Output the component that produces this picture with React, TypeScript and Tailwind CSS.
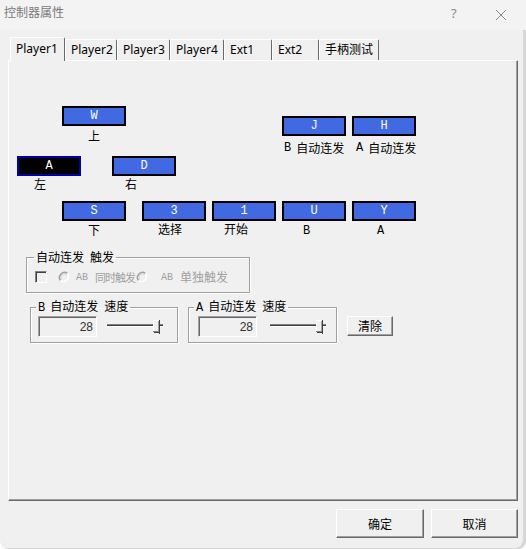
import React from "react";

const KeyBox = ({ k, dark }: { k: string; dark?: boolean }) => (
  <div
    className={
      dark
        ? "w-[64px] h-[20px] border-2 border-[#0000a8] bg-black text-white text-center font-['Liberation_Mono',monospace] text-[12px] leading-[16px]"
        : "w-[64px] h-[20px] border-2 border-black bg-[#4169e1] text-white text-center font-['Liberation_Mono',monospace] text-[12px] leading-[16px]"
    }
  >
    {k}
  </div>
);

const Mono = ({ children }: { children: React.ReactNode }) => (
  <span className="font-['Liberation_Mono',monospace] text-[12px]">{children}</span>
);

const Gap = ({ w }: { w: string }) => <span className={`inline-block ${w}`} />;

const Radio = () => (
  <svg width="12" height="12" viewBox="0 0 12 12" className="shrink-0">
    <path d="M9.5 2.5 A5 5 0 0 0 2.5 9.5" fill="none" stroke="#a0a0a0" strokeWidth="1.5" />
    <path d="M8.5 3.5 A3.6 3.6 0 0 0 3.5 8.5" fill="none" stroke="#d0d0d0" strokeWidth="1" />
    <path d="M2.5 9.5 A5 5 0 0 0 9.5 2.5" fill="none" stroke="#ffffff" strokeWidth="1.5" />
  </svg>
);

const Slider = () => (
  <svg width="57" height="16" viewBox="0 0 57 16" className="shrink-0">
    <rect x="0" y="5" width="56" height="1" fill="#808080" />
    <rect x="0" y="6" width="56" height="1" fill="#404040" />
    <rect x="0" y="7" width="56" height="1" fill="#ffffff" />
    <rect x="46" y="1" width="7" height="12" fill="#f0f0f0" />
    <rect x="46" y="1" width="1" height="12" fill="#ffffff" />
    <rect x="46" y="1" width="7" height="1" fill="#ffffff" />
    <rect x="52" y="1" width="1" height="14" fill="#404040" />
    <rect x="51" y="2" width="1" height="12" fill="#a0a0a0" />
    <rect x="46" y="12" width="6" height="1" fill="#808080" />
    <rect x="47" y="13" width="5" height="1" fill="#404040" />
  </svg>
);

const Edit = ({ w }: { w: string }) => (
  <div
    className={`${w} h-[21px] border border-t-[#a0a0a0] border-l-[#a0a0a0] border-r-white border-b-white shadow-[inset_1px_1px_0_#696969] bg-[#f0f0f0] flex items-center justify-end pr-[3px] font-['Liberation_Sans',sans-serif] text-[12px] text-[#333]`}
  >
    28
  </div>
);

const Btn = ({ label, w, h }: { label: string; w: string; h: string }) => (
  <div
    className={`${w} ${h} bg-[#f0f0f0] border border-t-white border-l-white border-r-[#696969] border-b-[#696969] shadow-[inset_-1px_-1px_0_#a0a0a0] flex items-center justify-center text-[12px]`}
  >
    {label}
  </div>
);

const tabs = [
  { t: "Player1", w: "w-[55px]" },
  { t: "Player2", w: "w-[52px]" },
  { t: "Player3", w: "w-[53px]" },
  { t: "Player4", w: "w-[54px]" },
  { t: "Ext1", w: "w-[48px]" },
  { t: "Ext2", w: "w-[47px]" },
  { t: "手柄测试", w: "w-[60px]" },
];

export default function App() {
  return (
    <div className="w-[526px] h-[549px] bg-[#f0f0f0] flex flex-col overflow-hidden rounded-b-[8px] shadow-[inset_-3px_-1px_0_#d8d8d8] font-['Noto_Sans','Noto_Sans_CJK_SC',sans-serif] text-[12px] text-black">
      {/* title bar */}
      <div className="h-[30px] flex items-start bg-[#f3f3f3]">
        <div className="pl-[4px] pt-[5px] leading-[16px] text-[12px] text-[#7a7a7a] flex-1">控制器属性</div>
        <div className="pt-[5px] leading-[16px] text-[13px] text-[#8a8a8a] w-[10px] mr-[34px]">?</div>
        <svg width="12" height="12" viewBox="0 0 12 12" className="mt-[9px] mr-[19px]">
          <path d="M1 1 L11 11 M11 1 L1 11" stroke="#8a8a8a" strokeWidth="1" />
        </svg>
      </div>

      {/* tabs */}
      <div className="h-[30px] flex items-end pl-[10px]">
        {tabs.map((tb, i) =>
          i === 0 ? (
            <div
              key={tb.t}
              className={`${tb.w} h-[24px] -mb-[1px] relative z-10 bg-[#f0f0f0] border-l border-t border-white border-r border-r-[#696969] rounded-tr-[2px] pl-[5px] pt-[3px] leading-[16px]`}
            >
              {tb.t}
            </div>
          ) : (
            <div
              key={tb.t}
              className={`${tb.w} h-[21px] bg-[#f0f0f0] border-l border-t border-white border-r border-r-[#696969] rounded-tr-[2px] pl-[5px] pt-[2px] leading-[16px]`}
            >
              {tb.t}
            </div>
          )
        )}
      </div>

      {/* panel */}
      <div className="ml-[8px] w-[510px] h-[441px] border border-t-white border-l-white border-r-[#696969] border-b-[#696969] shadow-[inset_-1px_-1px_0_#a0a0a0] flex flex-col font-['Noto_Sans_CJK_SC',sans-serif]">
        {/* row A */}
        <div className="mt-[45px] h-[50px] flex items-start">
          <div className="ml-[53px] flex flex-col">
            <KeyBox k="W" />
            <div className="mt-[3px] leading-[14px] text-center">上</div>
          </div>
          <div className="ml-[156px] mt-[10px] flex flex-col">
            <KeyBox k="J" />
            <div className="mt-[5px] leading-[14px] pl-[2px] whitespace-nowrap flex items-center">
              <Mono>B</Mono>
              <Gap w="w-[5px]" />
              自动连发
            </div>
          </div>
          <div className="ml-[6px] mt-[10px] flex flex-col">
            <KeyBox k="H" />
            <div className="mt-[5px] leading-[14px] pl-[4px] whitespace-nowrap flex items-center">
              <Mono>A</Mono>
              <Gap w="w-[5px]" />
              自动连发
            </div>
          </div>
        </div>

        {/* row B */}
        <div className="h-[45px] flex items-start">
          <div className="ml-[8px] flex flex-col">
            <KeyBox k="A" dark />
            <div className="mt-[1px] leading-[14px] pl-[17px]">左</div>
          </div>
          <div className="ml-[31px] flex flex-col">
            <KeyBox k="D" />
            <div className="mt-[1px] leading-[14px] pl-[13px]">右</div>
          </div>
        </div>

        {/* row C */}
        <div className="h-[49px] flex items-start">
          <div className="ml-[53px] flex flex-col">
            <KeyBox k="S" />
            <div className="mt-[2px] leading-[14px] text-center">下</div>
          </div>
          <div className="ml-[16px] flex flex-col">
            <KeyBox k="3" />
            <div className="mt-[1px] leading-[14px] pl-[16px]">选择</div>
          </div>
          <div className="ml-[6px] flex flex-col">
            <KeyBox k="1" />
            <div className="mt-[1px] leading-[14px] pl-[12px]">开始</div>
          </div>
          <div className="ml-[6px] flex flex-col">
            <KeyBox k="U" />
            <div className="mt-[1px] leading-[14px] pl-[21px]">
              <Mono>B</Mono>
            </div>
          </div>
          <div className="ml-[6px] flex flex-col">
            <KeyBox k="Y" />
            <div className="mt-[1px] leading-[14px] pl-[25px]">
              <Mono>A</Mono>
            </div>
          </div>
        </div>

        {/* trigger group */}
        <fieldset className="ml-[17px] w-[224px] border border-[#a0a0a0] shadow-[1px_1px_0_#ffffff,inset_1px_1px_0_#ffffff] pb-[9px]">
          <legend className="ml-[7px] px-[2px] leading-[14px] whitespace-nowrap">
            自动连发
            <Gap w="w-[6px]" />
            触发
          </legend>
          <div className="mt-[7px] pl-[8px] flex items-center h-[12px]">
            <div className="w-[12px] h-[12px] shrink-0 border border-t-[#808080] border-l-[#808080] border-r-white border-b-white shadow-[inset_1px_1px_0_#404040] bg-[#f0f0f0]" />
            <div className="ml-[11px]">
              <Radio />
            </div>
            <span className="ml-[6px] font-['Liberation_Mono',monospace] text-[10px] text-[#a0a0a0]">AB</span>
            <span className="ml-[7px] text-[11px] tracking-[-1px] text-[#a0a0a0] whitespace-nowrap leading-[12px]">同时触发</span>
            <div className="ml-[1px]">
              <Radio />
            </div>
            <span className="ml-[13px] font-['Liberation_Mono',monospace] text-[10px] text-[#a0a0a0]">AB</span>
            <span className="ml-[7px] text-[12px] text-[#a0a0a0] whitespace-nowrap leading-[12px]">单独触发</span>
          </div>
        </fieldset>

        {/* speed groups */}
        <div className="mt-[6px] flex items-start">
          <fieldset className="ml-[21px] w-[148px] border border-[#a0a0a0] shadow-[1px_1px_0_#ffffff,inset_1px_1px_0_#ffffff] pb-[5px]">
            <legend className="ml-[5px] px-[2px] leading-[14px] whitespace-nowrap">
              <Mono>B</Mono>
              <Gap w="w-[5px]" />
              自动连发
              <Gap w="w-[6px]" />
              速度
            </legend>
            <div className="mt-[1px] flex items-start">
              <div className="ml-[7px]">
                <Edit w="w-[59px]" />
              </div>
              <div className="ml-[10px] mt-[3px]">
                <Slider />
              </div>
            </div>
          </fieldset>
          <fieldset className="ml-[10px] w-[149px] border border-[#a0a0a0] shadow-[1px_1px_0_#ffffff,inset_1px_1px_0_#ffffff] pb-[5px]">
            <legend className="ml-[5px] px-[2px] leading-[14px] whitespace-nowrap">
              <Mono>A</Mono>
              <Gap w="w-[5px]" />
              自动连发
              <Gap w="w-[6px]" />
              速度
            </legend>
            <div className="mt-[1px] flex items-start">
              <div className="ml-[9px]">
                <Edit w="w-[59px]" />
              </div>
              <div className="ml-[13px] mt-[3px]">
                <Slider />
              </div>
            </div>
          </fieldset>
          <div className="ml-[10px] mt-[17px]">
            <Btn label="清除" w="w-[46px]" h="h-[20px]" />
          </div>
        </div>
      </div>

      {/* bottom buttons */}
      <div className="mt-[8px] flex justify-end gap-[7px] pr-[8px] font-['Noto_Sans_CJK_SC',sans-serif]">
        <Btn label="确定" w="w-[88px]" h="h-[29px]" />
        <Btn label="取消" w="w-[87px]" h="h-[29px]" />
      </div>
    </div>
  );
}
